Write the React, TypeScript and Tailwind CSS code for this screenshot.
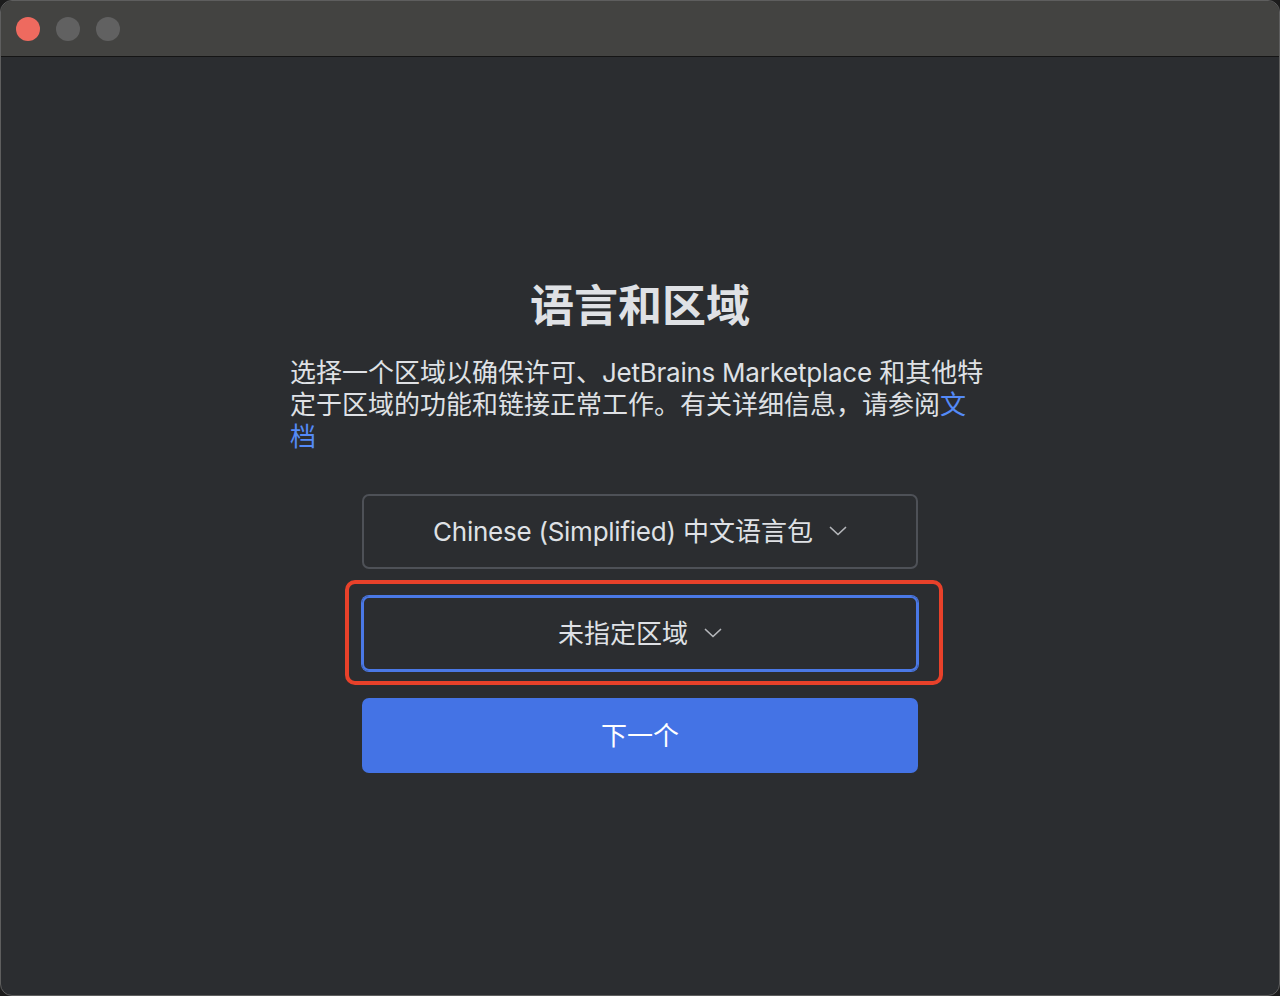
import React from "react";

const FONT = { fontFamily: 'Inter, "Noto Sans CJK SC", "Noto Sans", sans-serif' };

function Chevron() {
  return (
    <svg width="18" height="10" viewBox="0 0 18 10" fill="none" className="shrink-0">
      <path d="M1.5 1.5 L9 8.5 L16.5 1.5" stroke="#b4b6ba" strokeWidth="1.7" strokeLinecap="round" strokeLinejoin="round" />
    </svg>
  );
}

export default function App() {
  return (
    <div className="w-[1280px] h-[996px] bg-[#1c1c1c] overflow-hidden" style={FONT}>
      <div className="w-full h-full rounded-[12px] border border-[#5e5e5e] bg-[#2b2d30] overflow-hidden flex flex-col">
        <div className="h-[56px] shrink-0 bg-[#434341] border-b border-[#151515] flex items-center gap-[16px] pl-[15px]">
          <div className="w-[24px] h-[24px] rounded-full bg-[#ee6a5f]" />
          <div className="w-[24px] h-[24px] rounded-full bg-[#616161]" />
          <div className="w-[24px] h-[24px] rounded-full bg-[#616161]" />
        </div>
        <div className="flex-1 flex flex-col items-center justify-center">
          <div className="w-[700px] flex flex-col items-center">
            <h1 className="text-[44px] leading-[52px] font-bold text-[#dfe1e5] text-center">语言和区域</h1>
            <p className="mt-[25px] w-[700px] text-[26px] leading-[32px] text-[#dfe1e5] text-left">
              选择一个区域以确保许可、<span className="tracking-[-0.25px]">JetBrains Marketplace</span> 和其他特定于区域的功能和链接正常工作。有关详细信息，请参阅<span className="text-[#548af7]">文档</span>
            </p>
            <div className="mt-[41px] w-[556px] flex flex-col gap-[27px]">
              <div className="h-[75px] rounded-[7px] border-2 border-[#4e5157] flex items-center justify-center gap-[16px] text-[26px] text-[#dfe1e5]">
                <span>
                  <span className="tracking-[-0.25px]">Chinese (Simplified)</span> 中文语言包
                </span>
                <Chevron />
              </div>
              <div className="relative h-[75px]">
                <div className="h-full rounded-[7px] border-2 border-[#4a78e6] ring-1 ring-[#4a78e6] flex items-center justify-center gap-[16px] text-[26px] text-[#dfe1e5]">
                  <span>未指定区域</span>
                  <Chevron />
                </div>
                <div className="absolute left-[-17px] right-[-25px] top-[-16px] bottom-[-14px] rounded-[10px] border-4 border-[#e8412a] pointer-events-none" />
              </div>
              <div className="h-[75px] rounded-[7px] bg-[#4473e5] flex items-center justify-center text-[26px] text-white">
                下一个
              </div>
            </div>
          </div>
        </div>
      </div>
    </div>
  );
}
